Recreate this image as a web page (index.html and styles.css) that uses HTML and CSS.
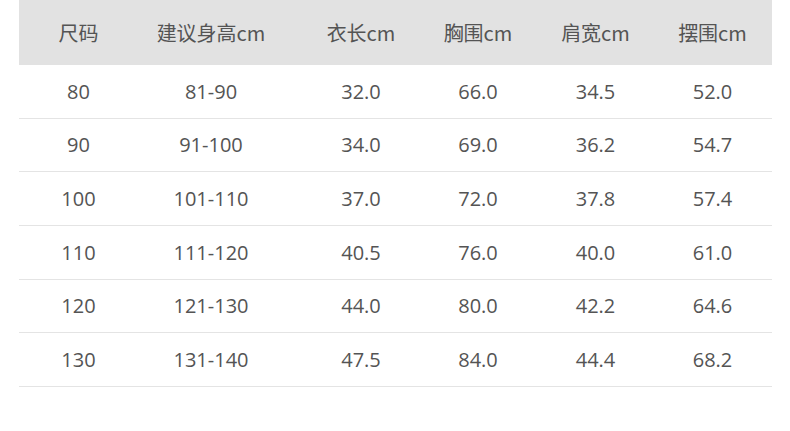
FILE: index.html
```html
<!DOCTYPE html>
<html lang="zh-CN">
<head>
<meta charset="utf-8">
<link rel="stylesheet" href="styles.css">
</head>
<body>
<div class="size-table">
  <div class="row head">
    <div>尺码</div><div>建议身高cm</div><div>衣长cm</div><div>胸围cm</div><div>肩宽cm</div><div>摆围cm</div>
  </div>
  <div class="row"><div>80</div><div>81-90</div><div>32.0</div><div>66.0</div><div>34.5</div><div>52.0</div></div>
  <div class="row"><div>90</div><div>91-100</div><div>34.0</div><div>69.0</div><div>36.2</div><div>54.7</div></div>
  <div class="row"><div>100</div><div>101-110</div><div>37.0</div><div>72.0</div><div>37.8</div><div>57.4</div></div>
  <div class="row"><div>110</div><div>111-120</div><div>40.5</div><div>76.0</div><div>40.0</div><div>61.0</div></div>
  <div class="row"><div>120</div><div>121-130</div><div>44.0</div><div>80.0</div><div>42.2</div><div>64.6</div></div>
  <div class="row"><div>130</div><div>131-140</div><div>47.5</div><div>84.0</div><div>44.4</div><div>68.2</div></div>
</div>
</body>
</html>
```
FILE: styles.css
```css
html, body {
  margin: 0;
  padding: 0;
  background: #ffffff;
}
body {
  font-family: "Open Sans", "Noto Sans CJK SC", sans-serif;
  font-size: 20px;
  color: #545454;
}
.size-table {
  margin-left: 19px;
  width: 753px;
}
.row {
  display: grid;
  grid-template-columns: 119px 146px 154px 80px 155px 79px;
  align-items: center;
  height: 53.67px;
  box-sizing: border-box;
  border-bottom: 1px solid #e4e4e4;
}
.row > div {
  text-align: center;
  white-space: nowrap;
}
.row.head {
  height: 65px;
  background: #e2e2e2;
  border-bottom: none;
  font-family: "Noto Sans CJK SC", sans-serif;
  padding-bottom: 1px;
}
```
